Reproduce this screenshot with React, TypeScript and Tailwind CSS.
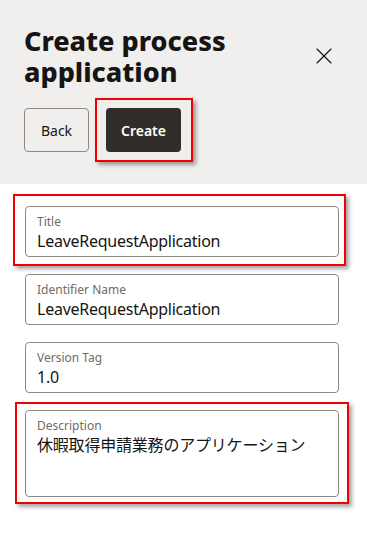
import { X } from 'lucide-react';

const font = { fontFamily: '"Noto Sans", "Noto Sans CJK JP", sans-serif' };

function Field({ label, value, tall = false, mark, cjk = false }: { label: string; value: string; tall?: boolean; mark?: string; cjk?: boolean }) {
  return (
    <div className={`relative border border-[#8c8985] rounded-[4px] bg-white px-[11px] pt-[7px] ${tall ? 'h-[87px]' : 'h-[51px]'}`}>
      <div className="text-[12px] leading-[16px] text-[#6f6b67]">{label}</div>
      <div className={`leading-[22px] text-[#161513] ${cjk ? 'text-[16px] tracking-[-0.2px]' : 'text-[16px] tracking-[-0.25px]'}`}>{value}</div>
      {mark && <span className={`absolute border-2 border-[#f00000] shadow-[3px_3px_4px_rgba(0,0,0,0.35)] pointer-events-none ${mark}`} />}
    </div>
  );
}

export default function App() {
  return (
    <div style={font} className="w-[367px] h-[534px] bg-white overflow-hidden">
      <div className="bg-[#f1efed] h-[184px] px-[24px] pt-[25px]">
        <div className="flex items-start justify-between">
          <h1 className="text-[27px] leading-[31px] font-extrabold text-[#161513]">Create process<br />application</h1>
          <X className="w-[28px] h-[28px] mt-[17px] mr-[5px] text-[#161513]" strokeWidth={1} />
        </div>
        <div className="flex gap-[17px] mt-[21px]">
          <button className="h-[44px] w-[65px] border border-[#8c8985] rounded-[4px] text-[14px] text-[#161513] bg-transparent">Back</button>
          <div className="relative">
            <button className="h-[44px] w-[75px] rounded-[4px] bg-[#312d2a] text-white text-[14px] font-semibold">Create</button>
            <span className="absolute -left-[11px] -top-[10px] -right-[12px] -bottom-[10px] border-2 border-[#f00000] shadow-[3px_3px_4px_rgba(0,0,0,0.35)] pointer-events-none" />
          </div>
        </div>
      </div>
      <div className="px-[25px] pr-[28px] pt-[22px] flex flex-col gap-[17px]">
        <Field label="Title" value="LeaveRequestApplication" mark="-left-[13px] -top-[13px] -right-[8px] -bottom-[10px]" />
        <Field label="Identifier Name" value="LeaveRequestApplication" />
        <Field label="Version Tag" value="1.0" />
        <Field label="Description" value="休暇取得申請業務のアプリケーション" tall cjk mark="-left-[11px] -top-[9px] -right-[11px] -bottom-[8px]" />
      </div>
    </div>
  );
}
